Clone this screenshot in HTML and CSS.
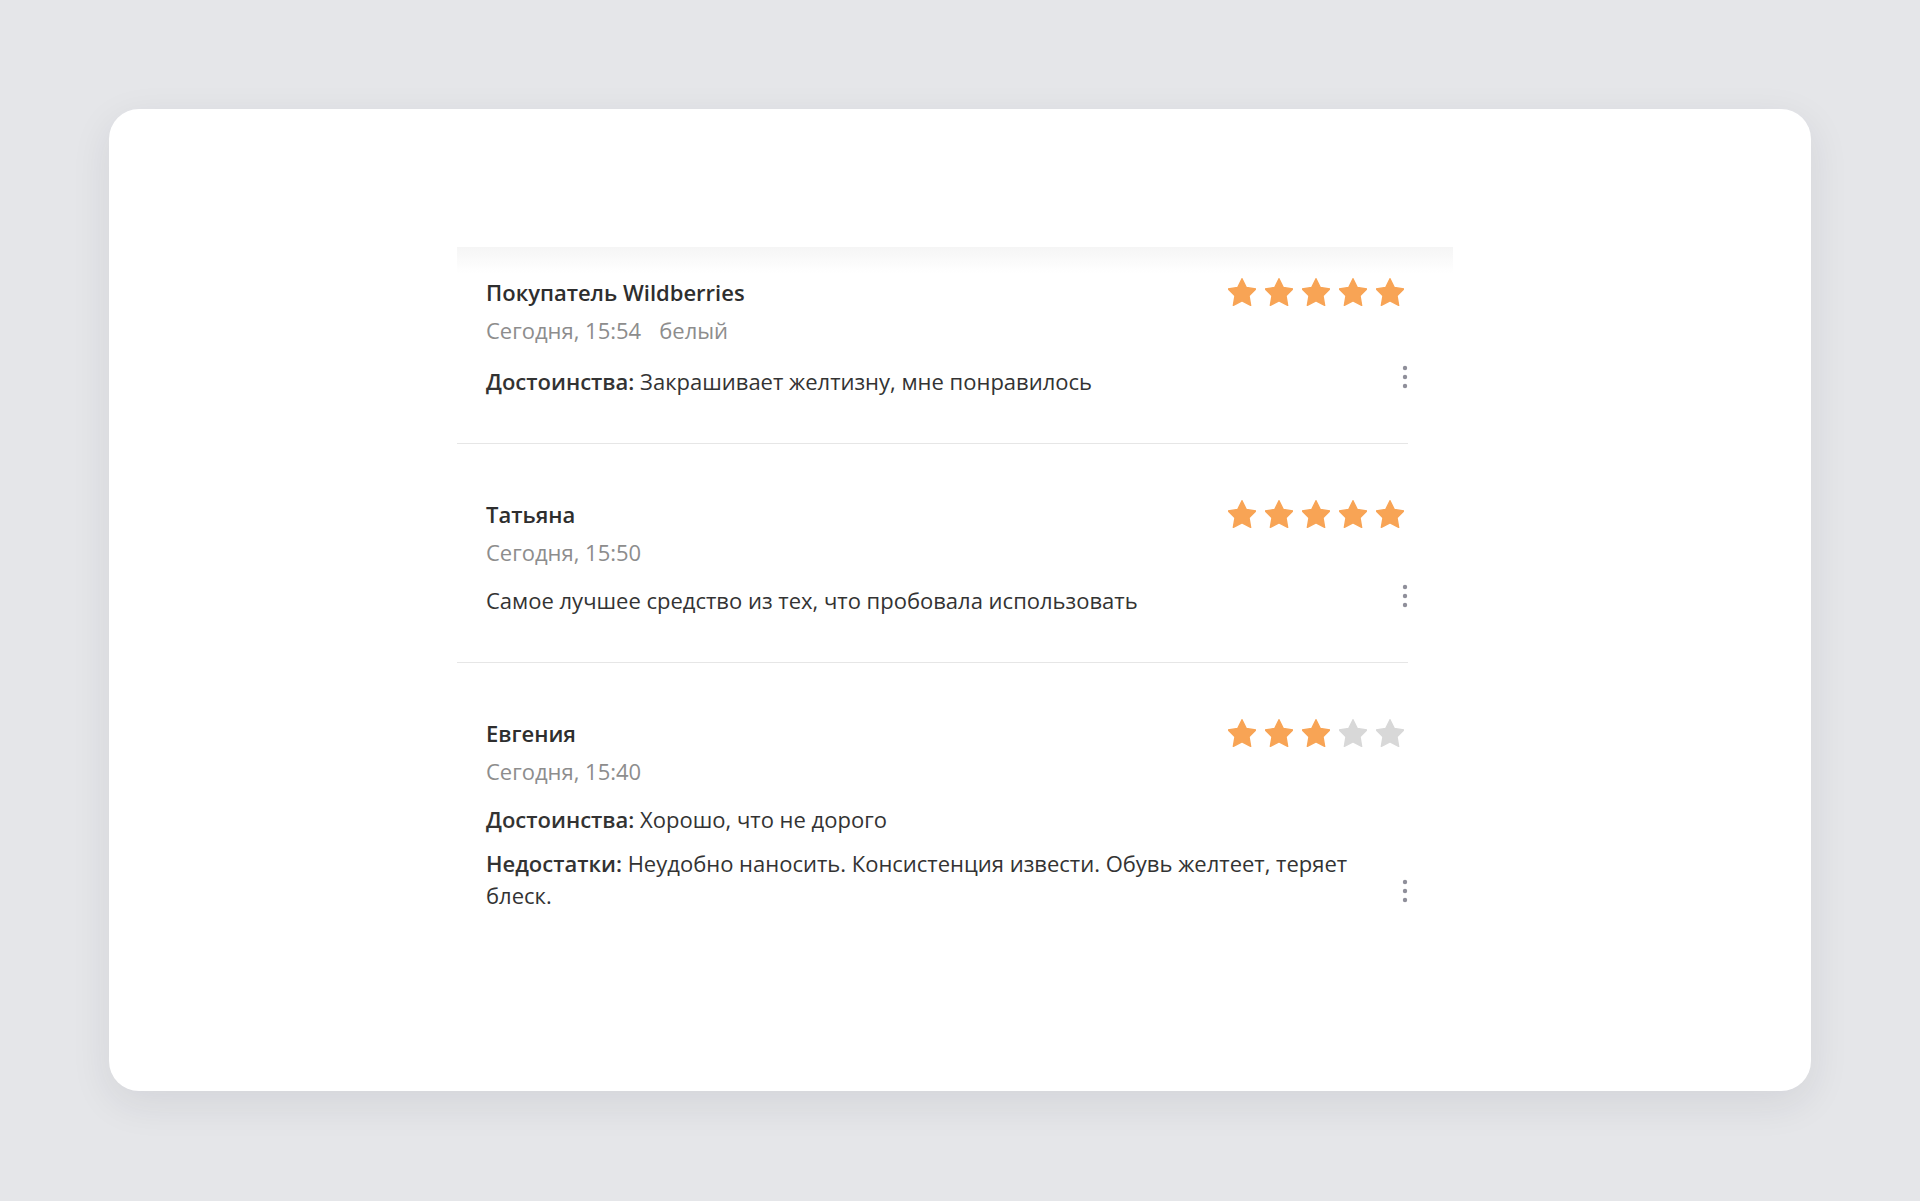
FILE: index.html
```html
<!DOCTYPE html>
<html lang="ru">
<head>
  <meta charset="UTF-8">
  <title>Отзывы</title>
  <link rel="stylesheet" href="styles.css">
</head>
<body>
  <main class="page">
    <div class="card">
      <section class="reviews">

        <article class="review">
          <div class="review-head">
            <div class="author">Покупатель Wildberries</div>
            <div class="stars">
              <svg class="star on" viewBox="2 1.5 20 20"><path d="M12 2l3.09 6.26L22 9.27l-5 4.87 1.18 6.88L12 17.77l-6.18 3.25L7 14.14 2 9.27l6.91-1.01L12 2z"/></svg>
              <svg class="star on" viewBox="2 1.5 20 20"><path d="M12 2l3.09 6.26L22 9.27l-5 4.87 1.18 6.88L12 17.77l-6.18 3.25L7 14.14 2 9.27l6.91-1.01L12 2z"/></svg>
              <svg class="star on" viewBox="2 1.5 20 20"><path d="M12 2l3.09 6.26L22 9.27l-5 4.87 1.18 6.88L12 17.77l-6.18 3.25L7 14.14 2 9.27l6.91-1.01L12 2z"/></svg>
              <svg class="star on" viewBox="2 1.5 20 20"><path d="M12 2l3.09 6.26L22 9.27l-5 4.87 1.18 6.88L12 17.77l-6.18 3.25L7 14.14 2 9.27l6.91-1.01L12 2z"/></svg>
              <svg class="star on" viewBox="2 1.5 20 20"><path d="M12 2l3.09 6.26L22 9.27l-5 4.87 1.18 6.88L12 17.77l-6.18 3.25L7 14.14 2 9.27l6.91-1.01L12 2z"/></svg>
            </div>
          </div>
          <div class="meta"><span>Сегодня, 15:54</span><span class="variant">белый</span></div>
          <div class="review-body">
            <div class="texts">
              <p><b>Достоинства:</b> Закрашивает желтизну, мне понравилось</p>
            </div>
            <button class="more" type="button">
              <svg viewBox="0 0 6 24" width="6" height="24"><circle cx="3" cy="3" r="2.2"/><circle cx="3" cy="12" r="2.2"/><circle cx="3" cy="21" r="2.2"/></svg>
            </button>
          </div>
        </article>

        <article class="review">
          <div class="review-head">
            <div class="author">Татьяна</div>
            <div class="stars">
              <svg class="star on" viewBox="2 1.5 20 20"><path d="M12 2l3.09 6.26L22 9.27l-5 4.87 1.18 6.88L12 17.77l-6.18 3.25L7 14.14 2 9.27l6.91-1.01L12 2z"/></svg>
              <svg class="star on" viewBox="2 1.5 20 20"><path d="M12 2l3.09 6.26L22 9.27l-5 4.87 1.18 6.88L12 17.77l-6.18 3.25L7 14.14 2 9.27l6.91-1.01L12 2z"/></svg>
              <svg class="star on" viewBox="2 1.5 20 20"><path d="M12 2l3.09 6.26L22 9.27l-5 4.87 1.18 6.88L12 17.77l-6.18 3.25L7 14.14 2 9.27l6.91-1.01L12 2z"/></svg>
              <svg class="star on" viewBox="2 1.5 20 20"><path d="M12 2l3.09 6.26L22 9.27l-5 4.87 1.18 6.88L12 17.77l-6.18 3.25L7 14.14 2 9.27l6.91-1.01L12 2z"/></svg>
              <svg class="star on" viewBox="2 1.5 20 20"><path d="M12 2l3.09 6.26L22 9.27l-5 4.87 1.18 6.88L12 17.77l-6.18 3.25L7 14.14 2 9.27l6.91-1.01L12 2z"/></svg>
            </div>
          </div>
          <div class="meta"><span>Сегодня, 15:50</span></div>
          <div class="review-body">
            <div class="texts">
              <p>Самое лучшее средство из тех, что пробовала использовать</p>
            </div>
            <button class="more" type="button">
              <svg viewBox="0 0 6 24" width="6" height="24"><circle cx="3" cy="3" r="2.2"/><circle cx="3" cy="12" r="2.2"/><circle cx="3" cy="21" r="2.2"/></svg>
            </button>
          </div>
        </article>

        <article class="review">
          <div class="review-head">
            <div class="author">Евгения</div>
            <div class="stars">
              <svg class="star on" viewBox="2 1.5 20 20"><path d="M12 2l3.09 6.26L22 9.27l-5 4.87 1.18 6.88L12 17.77l-6.18 3.25L7 14.14 2 9.27l6.91-1.01L12 2z"/></svg>
              <svg class="star on" viewBox="2 1.5 20 20"><path d="M12 2l3.09 6.26L22 9.27l-5 4.87 1.18 6.88L12 17.77l-6.18 3.25L7 14.14 2 9.27l6.91-1.01L12 2z"/></svg>
              <svg class="star on" viewBox="2 1.5 20 20"><path d="M12 2l3.09 6.26L22 9.27l-5 4.87 1.18 6.88L12 17.77l-6.18 3.25L7 14.14 2 9.27l6.91-1.01L12 2z"/></svg>
              <svg class="star" viewBox="2 1.5 20 20"><path d="M12 2l3.09 6.26L22 9.27l-5 4.87 1.18 6.88L12 17.77l-6.18 3.25L7 14.14 2 9.27l6.91-1.01L12 2z"/></svg>
              <svg class="star" viewBox="2 1.5 20 20"><path d="M12 2l3.09 6.26L22 9.27l-5 4.87 1.18 6.88L12 17.77l-6.18 3.25L7 14.14 2 9.27l6.91-1.01L12 2z"/></svg>
            </div>
          </div>
          <div class="meta"><span>Сегодня, 15:40</span></div>
          <div class="review-body">
            <div class="texts">
              <p><b>Достоинства:</b> Хорошо, что не дорого</p>
              <p><b>Недостатки:</b> Неудобно наносить. Консистенция извести. Обувь желтеет, теряет блеск.</p>
            </div>
            <button class="more" type="button">
              <svg viewBox="0 0 6 24" width="6" height="24"><circle cx="3" cy="3" r="2.2"/><circle cx="3" cy="12" r="2.2"/><circle cx="3" cy="21" r="2.2"/></svg>
            </button>
          </div>
        </article>

      </section>
    </div>
  </main>
</body>
</html>
```

FILE: styles.css
```css
html,
body {
  margin: 0;
  padding: 0;
}
body {
  background: #e5e6e9;
  font-family: "Open Sans", "Noto Sans", sans-serif;
  color: #333;
}
.page {
  padding: 109px;
  height: 1201px;
  box-sizing: border-box;
}
.card {
  height: 982px;
  box-sizing: border-box;
  background: #fff;
  border-radius: 30px;
  box-shadow: 0 12px 40px rgba(30, 30, 50, 0.09);
  padding: 138px 358px 0 348px;
}
.reviews {
  background: linear-gradient(to bottom, #f5f5f5, #fff 26px);
}
.review {
  margin-right: 45px;
  padding: 54px 0 46px 29px;
  border-bottom: 1px solid #e6e6e6;
}
.review:first-child {
  padding-top: 29px;
}
.review:first-child .review-body {
  margin-top: 19px;
}
.review:last-child {
  border-bottom: none;
}
.review-head {
  display: flex;
  justify-content: space-between;
  align-items: center;
  height: 32px;
  padding-right: 4px;
}
.author {
  font-size: 22px;
  font-weight: 600;
  line-height: 32px;
  color: #2e2e2e;
}
.stars {
  display: flex;
  gap: 9px;
}
.star {
  width: 28px;
  height: 28px;
  fill: #d8d8d8;
  stroke: #d8d8d8;
  stroke-width: 1;
  stroke-linejoin: round;
}
.star.on {
  fill: #f8a455;
  stroke: #f8a455;
}
.meta {
  margin-top: 6px;
  font-size: 22px;
  line-height: 32px;
  color: #8d8d8d;
}
.variant {
  margin-left: 18px;
}
.review-body {
  display: flex;
  align-items: flex-end;
  gap: 40px;
  margin-top: 16px;
}
.texts {
  flex: 1;
}
.texts p {
  margin: 12px 0 0;
  font-size: 22px;
  line-height: 32px;
}
.texts p:first-child {
  margin-top: 0;
}
.texts b {
  font-weight: 600;
}
.more {
  display: block;
  padding: 0;
  margin: 0 0 8px;
  border: none;
  background: none;
  width: 6px;
  height: 24px;
  fill: #8f8f9a;
}
.more svg {
  display: block;
}
```
